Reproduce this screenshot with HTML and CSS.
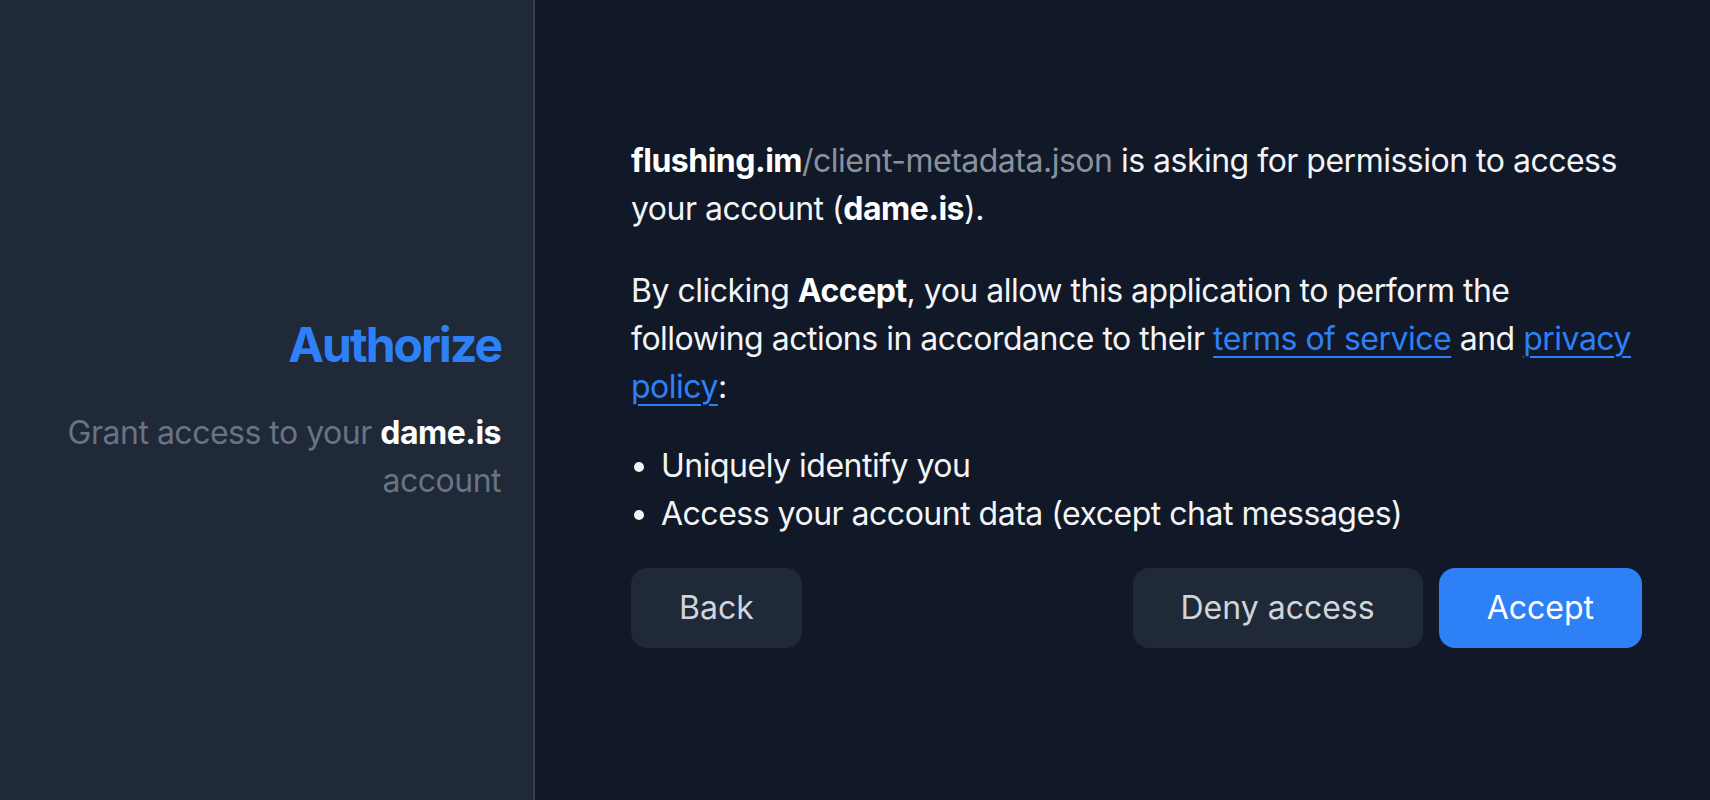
FILE: index.html
```html
<!DOCTYPE html>
<html lang="en">
<head>
<meta charset="utf-8">
<title>Authorize</title>
<link rel="stylesheet" href="styles.css">
</head>
<body>
<div class="layout">
  <aside class="side">
    <h1 class="title">Authorize</h1>
    <p class="subtitle">Grant access to your <strong>dame.is</strong> account</p>
  </aside>
  <main class="main">
    <div class="content">
      <p class="para intro"><strong>flushing.im</strong><span class="path">/client-metadata.json</span> is asking for permission to access your account (<strong>dame.is</strong>).</p>
      <p class="para consent">By clicking <strong>Accept</strong>, you allow this application to perform the following actions in accordance to their <a href="#" class="link">terms of service</a> and <a href="#" class="link">privacy policy</a>:</p>
      <ul class="perms">
        <li>Uniquely identify you</li>
        <li>Access your account data (except chat messages)</li>
      </ul>
      <div class="actions">
        <button class="btn btn-secondary" type="button">Back</button>
        <div class="actions-right">
          <button class="btn btn-secondary" type="button">Deny access</button>
          <button class="btn btn-primary" type="button">Accept</button>
        </div>
      </div>
    </div>
  </main>
</div>
</body>
</html>
```

FILE: styles.css
```css
* { box-sizing: border-box; }

html, body {
  margin: 0;
  padding: 0;
  height: 100%;
}

body {
  background: #111827;
  color: #f3f4f6;
  font-family: Inter, "Noto Sans", "Liberation Sans", sans-serif;
  font-size: 32px;
  line-height: 48px;
}

.layout {
  display: flex;
  height: 800px;
}

.side {
  width: 535px;
  flex: none;
  background: #1f2937;
  border-right: 2px solid #374151;
  padding: 313px 32px 0 32px;
  text-align: right;
}

.title {
  margin: 0;
  font-size: 48px;
  line-height: 64px;
  font-weight: 700;
  letter-spacing: -2px;
  color: #2e80f6;
}

.subtitle {
  margin: 32px 0 0;
  color: #687385;
  letter-spacing: -0.5px;
}

.subtitle strong {
  color: #ffffff;
  font-weight: 700;
}

.main {
  flex: 1;
  padding: 137px 0 0 96px;
}

.content {
  width: 1011px;
}

.para,
.perms {
  letter-spacing: -0.5px;
}

.para {
  margin: 0;
}

.intro {
  margin-bottom: 34px;
}

.consent {
  margin-bottom: 31px;
}

.para strong {
  font-weight: 700;
  color: #ffffff;
}

.path {
  color: #8b919c;
}

.link {
  color: #2e80f6;
  text-decoration: underline;
  text-underline-offset: 6px;
  text-decoration-thickness: 2px;
}

.perms {
  margin: 0 0 30px;
  padding-left: 30px;
}

.actions {
  display: flex;
  justify-content: space-between;
  align-items: center;
}

.actions-right {
  display: flex;
  gap: 16px;
}

.btn {
  height: 80px;
  padding: 0 48px;
  border: none;
  border-radius: 16px;
  font-family: inherit;
  font-size: 32px;
  line-height: 48px;
  cursor: pointer;
}

.btn-secondary {
  background: #1f2937;
  color: #d1d5db;
}

.btn-primary {
  background: #2e80f6;
  color: #ffffff;
}
```
